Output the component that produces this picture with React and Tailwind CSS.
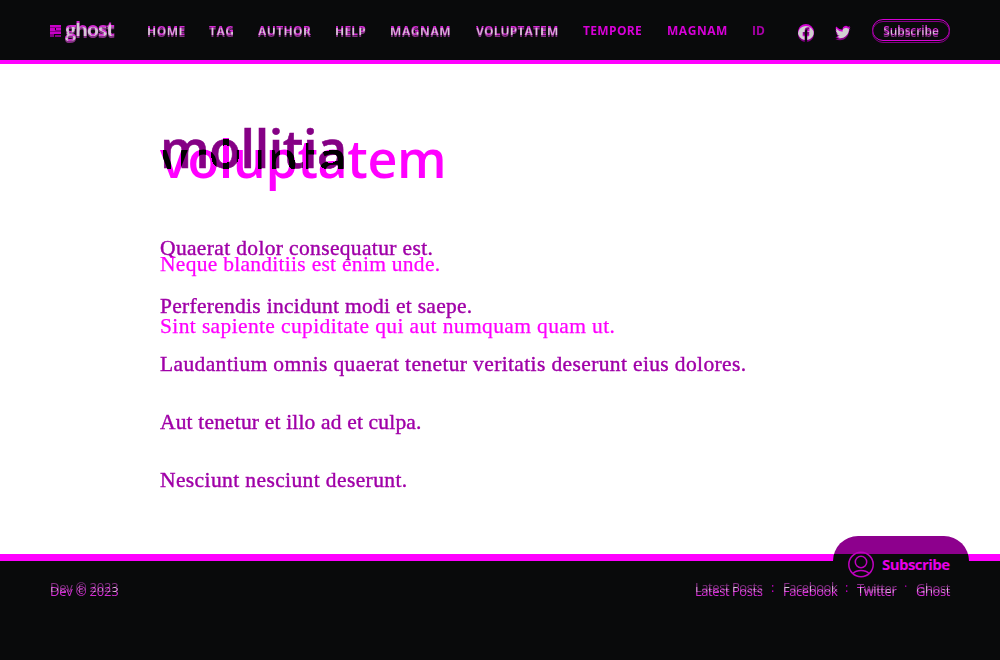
const nav = [
  ["HOME", "w-[62px] tracking-[0.5px]"],
  ["TAG", "w-[49px] tracking-[0.5px]"],
  ["AUTHOR", "w-[77px] tracking-[0.4px]"],
  ["HELP", "w-[55px] tracking-[0.2px]"],
  ["MAGNAM", "w-[86px] tracking-[0.6px]"],
  ["VOLUPTATEM", "w-[107px] tracking-[0.15px]"],
];
const extra = [
  ["TEMPORE", "w-[84px] tracking-[0.35px] text-[#d800d8]"],
  ["MAGNAM", "w-[85px] tracking-[0.55px] text-[#d800d8]"],
  ["ID", "w-[20px] text-[#a800a8]"],
];
const lines = [
  ["Quaerat dolor consequatur est.", "tracking-[0.35px]"],
  ["Perferendis incidunt modi et saepe.", "tracking-[0.28px]"],
  ["Laudantium omnis quaerat tenetur veritatis deserunt eius dolores.", "tracking-[0.37px]"],
  ["Aut tenetur et illo ad et culpa.", "tracking-[0.17px]"],
  ["Nesciunt nesciunt deserunt.", "tracking-[0.39px]"],
];

// Text with an offset ghost; the area shared by both copies lights up.
function Ghosted({ text, className = "", shift = "before:translate-y-[2px]" }) {
  return (
    <span
      data-t={text}
      className={
        "grid whitespace-nowrap before:col-start-1 before:row-start-1 before:text-[#853085] before:content-[attr(data-t)] after:col-start-1 after:row-start-1 after:text-[#00c200] after:mix-blend-color-dodge after:content-[attr(data-t)] " +
        shift + " " + className
      }
    >
      <span className="z-10 col-start-1 row-start-1 text-[#d400d4] mix-blend-lighten">{text}</span>
    </span>
  );
}

// Icon drawn as purple ghost, magenta top copy and light shared area.
function GhostIcon({ id, d, box, className }) {
  return (
    <svg className={className} viewBox={box}>
      <defs><clipPath id={id}><path d={d} transform="translate(0 2)" /></clipPath></defs>
      <path d={d} fill="#850085" transform="translate(0 2)" />
      <path d={d} fill="#d400d4" />
      <path d={d} fill="#d0d0d0" clipPath={"url(#" + id + ")"} />
    </svg>
  );
}
const fb = "M8 0a8 8 0 0 0-1.3 15.9V10.300H4.700V8h2V6.250C6.700 4.250 7.900 3.150 9.700 3.150c.9 0 1.800.16 1.800.16v2h-1c-1 0-1.300.62-1.300 1.250V8h2.200l-.35 2.300H9.200v5.600A8 8 0 0 0 8 0z";
const tw = "M15.500 2.300c-.6.25-1.200.42-1.800.5.65-.4 1.150-1 1.400-1.750-.6.35-1.300.62-2 .77A3.150 3.150 0 0 0 7.700 4.700 9 9 0 0 1 1.200 1.400a3.150 3.150 0 0 0 1 4.200c-.5 0-1-.15-1.400-.4 0 1.550 1.050 2.850 2.500 3.150-.46.12-.95.14-1.400.05.4 1.250 1.550 2.150 2.950 2.200A6.300 6.300 0 0 1 .2 11.900 9 9 0 0 0 5 13.300c5.800 0 9.150-4.900 8.950-9.350.6-.45 1.150-1 1.550-1.650z";

export default function App() {
  return (
    <div className="relative flex h-[660px] w-[1000px] flex-col overflow-hidden bg-white font-['Open_Sans',sans-serif]">
      <header className="isolate flex h-[64px] shrink-0 border-b-4 border-[#ff00ff] bg-[#090a0b] pl-[50px]">
        <div className="flex w-[97px] pt-[15px]">
          <svg className="mt-[10px] mr-[3px] h-[13px] w-[12px]" viewBox="0 0 12 13" shapeRendering="crispEdges">
            <path fill="#c800c8" d="M0 0h11v2H0zM0 3h5v3H0zM6 3h5v2H6zM0 7h11v2H0z" />
            <path fill="#850085" d="M0 2h11v1H0zM5 5h6v1H5zM0 6h11v1H0zM0 9h4v3H0zM5 10h6v2H5z" />
          </svg>
          <Ghosted text="ghost" className="h-[28px] text-[20px] leading-[28px] font-bold tracking-[-1.35px]" />
        </div>
        <nav className="flex w-[650px] pt-[23px] text-[12px] leading-[16px] font-bold whitespace-nowrap">
          {nav.map(([t, c]) => <div key={t} className={c}><Ghosted text={t} /></div>)}
          {extra.map(([t, c]) => <span key={t} className={c}>{t}</span>)}
        </nav>
        <div className="flex pt-[19px]">
          <GhostIcon id="fb" d={fb} box="0 0 16 18" className="mt-[5px] ml-[1px] h-[18px] w-[16px]" />
          <GhostIcon id="tw" d={tw} box="0 0 16 16" className="mt-[6px] ml-[21px] h-[16px] w-[16px]" />
          <div className="relative ml-[21px] flex h-[22px] w-[78px] justify-center rounded-full border border-[#d400d4] before:absolute before:-inset-x-px before:top-[1px] before:h-[22px] before:rounded-full before:border before:border-[#850085] before:content-['']">
            <Ghosted text="Subscribe" className="mt-[3px] h-[18px] text-[12px] leading-[16px] font-semibold tracking-[-0.1px]" />
          </div>
        </div>
      </header>

      <main className="isolate h-[490px] shrink-0 bg-white pl-[160px]">
        <div className="grid h-[170px] content-start whitespace-nowrap">
          <h1 className="col-start-1 row-start-1 pt-[46px] text-[52px] leading-[76px] font-semibold tracking-[-0.4px] text-[#850085] [-webkit-text-stroke:0.6px_#850085]">mollitia</h1>
          <h1 className="col-start-1 row-start-1 grid justify-items-start pt-[56px] text-[52px] leading-[76px] font-semibold tracking-[-0.4px] before:col-start-1 before:row-start-1 before:text-black before:mix-blend-color-burn before:content-['voluptatem']">
            <span className="col-start-1 row-start-1 text-[#ff00ff] mix-blend-multiply">voluptatem</span>
          </h1>
        </div>
        <div className="grid font-['Liberation_Serif',serif] whitespace-nowrap">
          <div className="col-start-1 row-start-1 text-[21.5px] [-webkit-text-stroke:0.4px_#a000a8]">
            {lines.map(([t, c]) => <p key={t} className={"h-[58px] leading-[28px] text-[#a000a8] " + c}>{t}</p>)}
          </div>
          <div className="col-start-1 row-start-1 pt-[16px] text-[21.5px] text-[#ff00ff] [-webkit-text-stroke:0.25px_#ff00ff]">
            <p className="h-[62px] leading-[28px] tracking-[0.28px]">Neque blanditiis est enim unde.</p>
            <p className="leading-[28px] tracking-[0.37px]">Sint sapiente cupiditate qui aut numquam quam ut.</p>
          </div>
        </div>
      </main>

      <footer className="isolate flex h-[106px] shrink-0 border-t-[7px] border-[#ff00ff] bg-[#090a0b] pt-[20px] pl-[50px] text-[13px] leading-[20px]">
        <div className="w-[645px]"><Ghosted text="Dev © 2023" shift="before:translate-y-[-4px]" className="font-medium tracking-[-0.2px]" /></div>
        <div className="flex tracking-[-0.45px]">
          <div className="w-[76px] font-medium"><Ghosted text="Latest Posts" shift="before:translate-y-[-4px]" /></div>
          <span className="-mt-[4px] w-[12px] text-[#c000c0]">:</span>
          <div className="w-[62px] font-medium"><Ghosted text="Facebook" shift="before:translate-y-[-4px]" /></div>
          <span className="-mt-[4px] w-[12px] text-[#c000c0]">:</span>
          <div className="w-[47px]"><Ghosted text="Twitter" shift="before:translate-y-[-3px]" /></div>
          <span className="-mt-[5px] w-[12px] text-[#a000a0]">·</span>
          <Ghosted text="Ghost" shift="before:translate-y-[-3px]" />
        </div>
      </footer>

      <aside className="absolute top-[536px] left-[833px] h-[46px] w-[136px]">
        <div className="h-[25px] rounded-t-[30px] bg-[linear-gradient(#8d008d_18px,#090a0b_18px)]" />
        <div className="-mt-[10px] flex items-center pl-[14px]">
          <svg className="h-[28px] w-[28px]" viewBox="0 0 28 28" fill="none" stroke="#c000c0" strokeWidth="1.500">
            <circle cx="14" cy="13.500" r="12.200" />
            <circle cx="14" cy="11" r="5.700" />
            <path d="M6 22.500c2-2.200 5-3 8-3s6 .8 8 3" />
          </svg>
          <span className="-mt-[2px] ml-[7px] text-[15px] leading-[20px] font-bold tracking-[-0.55px] text-[#e800e8]">Subscribe</span>
        </div>
      </aside>
    </div>
  );
}
